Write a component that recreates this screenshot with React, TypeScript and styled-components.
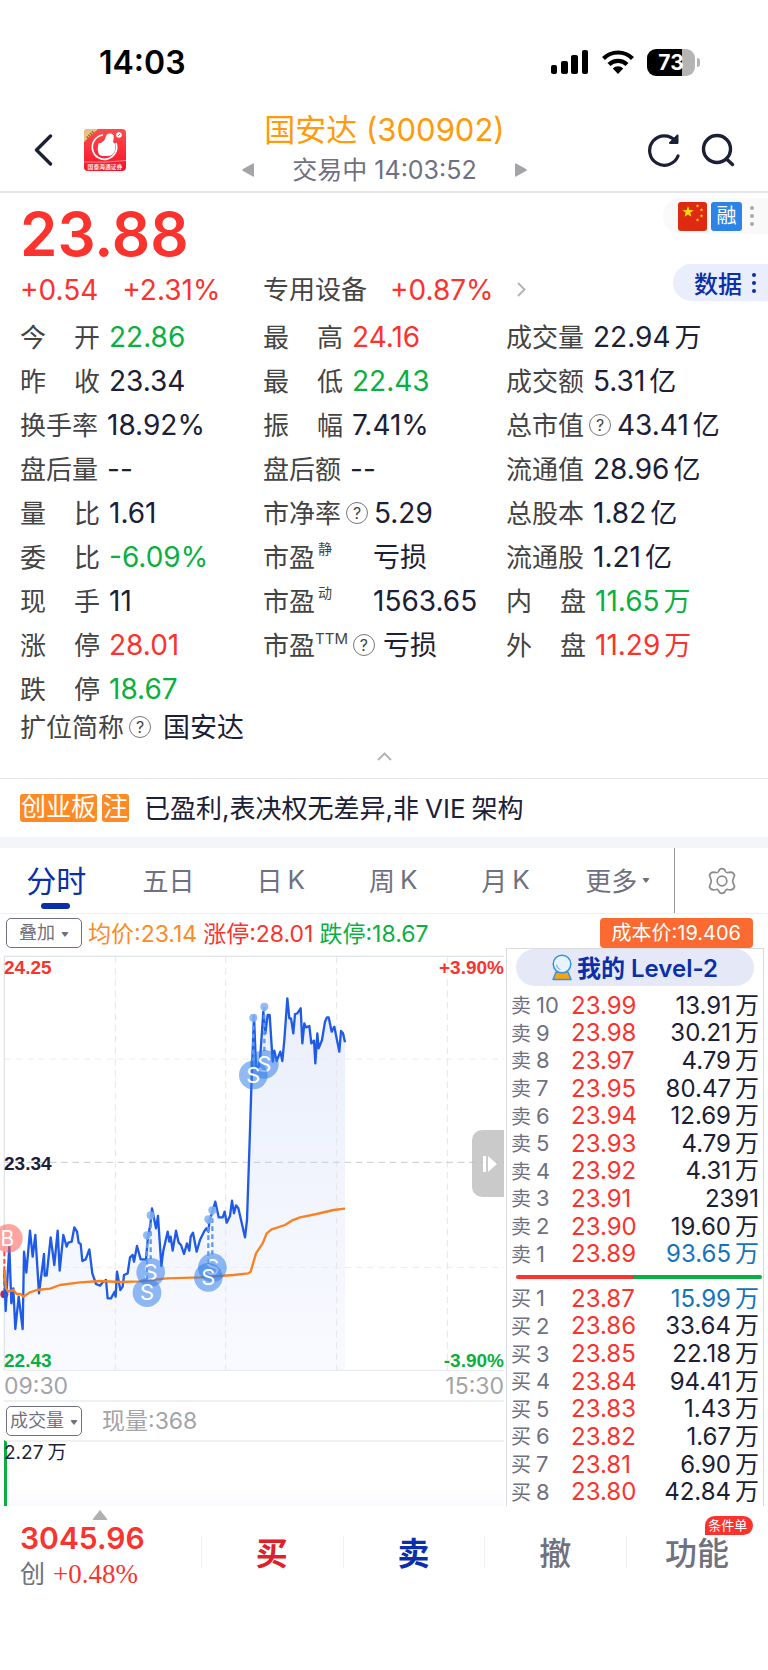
import React from "react";
import styled, { createGlobalStyle, css } from "styled-components";

const color = {
  ink: "#1b2036",
  label: "#444444",
  muted: "#6f7180",
  faint: "#a3a3a8",
  red: "#fa332e",
  green: "#0ab03f",
  blue: "#0a2fa8",
  link: "#1573bd",
  orange: "#fe8a25",
  line: "#e4e6ea",
};

type Tone = "up" | "down" | "plain" | "link";
const tones: Record<Tone, string> = {
  up: color.red,
  down: color.green,
  plain: color.ink,
  link: color.link,
};

const GlobalStyle = createGlobalStyle`
  * { box-sizing: border-box; }
  body {
    margin: 0;
    background: #fff;
    color: ${color.ink};
    font-family: Inter, "Noto Sans CJK SC", sans-serif;
    font-size: 26px;
  }
  button {
    font: inherit;
    color: inherit;
    background: none;
    border: 0;
    padding: 0;
    margin: 0;
    cursor: pointer;
  }
  a { color: inherit; text-decoration: none; }
  svg { display: block; flex: none; }
`;

/* ---------- status bar ---------- */

const StatusBar = styled.div`
  display: flex;
  align-items: center;
  justify-content: space-between;
  height: 100px;
  padding: 24px 68px 0 99px;
`;
const Clock = styled.time`
  color: #000;
  font-size: 32px;
  font-weight: 600;
`;
const StatusIcons = styled.div`
  display: flex;
  align-items: center;
  gap: 13px;
`;
const Battery = styled.div`
  display: flex;
  align-items: center;
  gap: 2px;
  &::after {
    content: "";
    width: 3px;
    height: 9px;
    border-radius: 0 3px 3px 0;
    background: #b4b4b4;
  }
`;
const BatteryBody = styled.span`
  width: 48px;
  height: 27px;
  border-radius: 9px;
  background: linear-gradient(90deg, #000 73%, #b4b4b4 73%);
  color: #fff;
  font-size: 21px;
  font-weight: 700;
  line-height: 27px;
  text-align: center;
`;

/* ---------- header ---------- */

const Header = styled.header`
  display: grid;
  grid-template-columns: 1fr auto 1fr;
  align-items: center;
  height: 93px;
  padding: 5px 33px 0 34px;
  border-bottom: 2px solid ${color.line};
`;
const HeaderSide = styled.div<{ $end?: boolean }>`
  display: flex;
  align-items: center;
  gap: ${(p) => (p.$end ? 20 : 31)}px;
  padding-top: 3px;
  justify-content: ${(p) => (p.$end ? "flex-end" : "flex-start")};
`;
const HeaderTitle = styled.div`
  display: flex;
  flex-direction: column;
  align-items: center;
  gap: 4px;
`;
const StockName = styled.h1`
  margin: 0;
  color: #ff9a0a;
  font-size: 31px;
  font-weight: 400;
  line-height: 40px;
`;
const Session = styled.div`
  display: flex;
  align-items: center;
  gap: 38px;
  color: ${color.muted};
  font-size: 25px;
  line-height: 32px;
`;

/* ---------- quote ---------- */

const Quote = styled.section`
  padding: 0 0 12px 20px;
`;
const PriceRow = styled.div`
  display: flex;
  justify-content: space-between;
  align-items: flex-start;
  height: 71px;
  padding-top: 5px;
`;
const Price = styled.strong`
  color: ${color.red};
  font-size: 60px;
  font-weight: 600;
  line-height: 72px;
`;
const TagPill = styled.div`
  display: flex;
  align-items: center;
  gap: 4px;
  height: 36px;
  padding: 0 14px 0 15px;
  border-radius: 18px 0 0 18px;
  background: #f9f9fa;
`;
const MarginTag = styled.span`
  width: 31px;
  height: 29px;
  border-radius: 3px;
  background: #2e83e6;
  color: #fff;
  font-size: 20px;
  line-height: 28px;
  text-align: center;
`;
const Columns = styled.div`
  display: grid;
  grid-template-columns: minmax(0, 243fr) minmax(0, 243fr) minmax(0, 262fr);
`;
const ChangeRow = styled(Columns)`
  align-items: center;
  height: 51px;
`;
const Change = styled.div`
  display: flex;
  gap: 24px;
  color: ${color.red};
  font-size: 28px;
`;
const Sector = styled.a`
  display: flex;
  align-items: center;
  gap: 23px;
  color: ${color.label};
  white-space: nowrap;
`;
const SectorName = styled.span`
  padding-bottom: 4px;
`;
const DataButton = styled.button`
  display: flex;
  align-items: center;
  justify-self: end;
  gap: 10px;
  height: 37px;
  margin-bottom: 14px;
  padding: 0 12px 0 21px;
  border-radius: 19px 0 0 19px;
  background: #eaedfb;
  color: ${color.blue};
  font-size: 24px;
  font-weight: 500;
`;
const StatColumn = styled.dl`
  margin: 0;
`;
const Stat = styled.div<{ $compact?: boolean }>`
  display: flex;
  align-items: center;
  height: ${(p) => (p.$compact ? 31 : 44)}px;
  white-space: nowrap;
`;
const StatLabel = styled.dt<{ $spread?: boolean }>`
  display: flex;
  align-items: center;
  padding-bottom: 3px;
  color: ${color.label};
  ${(p) =>
    p.$spread &&
    css`
      width: 80px;
      justify-content: space-between;
    `}
`;
const Sup = styled.sup<{ $wide?: boolean }>`
  align-self: flex-start;
  margin-left: ${(p) => (p.$wide ? 0 : 3)}px;
  font-size: ${(p) => (p.$wide ? 15 : 14)}px;
  line-height: ${(p) => (p.$wide ? 28 : 24)}px;
`;
const StatValue = styled.dd<{ $tone: Tone; $gap: number }>`
  display: flex;
  align-items: center;
  margin: 0 0 0 ${(p) => p.$gap}px;
  color: ${(p) => tones[p.$tone]};
  font-size: 28px;
`;
const Words = styled.span`
  padding-bottom: 3px;
  font-size: 27px;
`;
const Unit = styled.span`
  margin-left: 4px;
`;
const StatUnit = styled(Words)`
  margin-left: 4px;
`;
const Help = styled.span`
  display: inline-block;
  width: 22px;
  height: 22px;
  margin: 3px 0 0 5px;
  border: 1px solid #777;
  border-radius: 50%;
  color: ${color.label};
  font-size: 16px;
  line-height: 20px;
  text-align: center;
`;
const CollapseButton = styled.button`
  display: block;
  margin: 5px auto 0;
  padding: 5px 20px 5px 0;
`;

/* ---------- notice ---------- */

const Notice = styled.section`
  display: flex;
  align-items: center;
  height: 59px;
  padding: 0 20px;
  border-top: 1px solid ${color.line};
`;
const NoticeTag = styled.span`
  height: 28px;
  margin-right: 5px;
  padding: 0 1px;
  border-radius: 3px;
  background: ${color.orange};
  color: #fff;
  font-size: 25px;
  line-height: 27px;
`;
const NoticeText = styled.p`
  margin: 0 0 0 10px;
  padding-bottom: 4px;
`;
const Word = styled.span`
  margin: 0 6px;
`;
const Band = styled.div`
  height: 11px;
  background: #f3f5fb;
`;

/* ---------- tabs ---------- */

const Tabs = styled.nav`
  display: grid;
  grid-template-columns: 675fr 93fr;
  height: 66px;
  border-bottom: 1px solid #eef0f3;
`;
const TabList = styled.div`
  display: flex;
  border-right: 1px solid #999;
`;
const Tab = styled.button<{ $active?: boolean }>`
  position: relative;
  flex: 1;
  display: flex;
  align-items: center;
  justify-content: center;
  gap: 5px;
  padding-bottom: 3px;
  color: ${(p) => (p.$active ? color.blue : color.muted)};
  font-size: ${(p) => (p.$active ? 30 : 26)}px;
  ${(p) =>
    p.$active &&
    css`
      &::after {
        content: "";
        position: absolute;
        left: calc(50% - 15px);
        bottom: 4px;
        width: 29px;
        height: 6px;
        border-radius: 3px;
        background: ${color.blue};
      }
    `}
`;
const SettingsButton = styled.button`
  display: flex;
  align-items: center;
  justify-content: center;
`;
const Caret = styled.span`
  margin-top: 2px;
  border: 4px solid transparent;
  border-top: 5px solid currentColor;
  border-bottom: 0;
  border-radius: 2px;
`;

/* ---------- chart ---------- */

const Legend = styled.div`
  display: flex;
  align-items: center;
  gap: 6px;
  height: 34px;
  padding: 4px 15px 0 6px;
  font-size: 23px;
  line-height: 30px;
`;
const LegendValue = styled.span<{ $color: string }>`
  padding-top: 1px;
  color: ${(p) => p.$color};
  white-space: nowrap;
`;
const CostTag = styled.span`
  margin-left: auto;
  padding: 0 12px;
  border-radius: 4px;
  background: #fb6a30;
  color: #fff;
  font-size: 20px;
  line-height: 30px;
`;
const Picker = styled.button`
  display: flex;
  align-items: center;
  justify-content: center;
  gap: 6px;
  width: 76px;
  height: 30px;
  border: 1px solid ${color.muted};
  border-radius: 5px;
  color: ${color.muted};
  font-size: 18px;
  white-space: nowrap;
`;
const Market = styled.div`
  display: flex;
  align-items: stretch;
`;
const ChartColumn = styled.div`
  flex: 1;
  min-width: 0;
  padding-top: 7px;
`;
const ChartBox = styled.div`
  position: relative;
  svg {
    width: 100%;
    height: auto;
  }
`;
const AxisLabel = styled.span<{ $side: "left" | "right"; $at: string; $color: string }>`
  position: absolute;
  ${(p) => p.$side}: ${(p) => (p.$side === "left" ? 4 : 2)}px;
  top: ${(p) => p.$at};
  color: ${(p) => p.$color};
  font-family: "Liberation Sans", sans-serif;
  font-size: 19px;
  font-weight: 700;
  line-height: 22px;
`;
const TimeAxis = styled.div`
  display: flex;
  align-items: center;
  justify-content: space-between;
  height: 31px;
  margin: 0 2px 0 4px;
  border-bottom: 2px solid #eef0f2;
  color: ${color.faint};
  font-size: 23px;
`;
const VolumeHead = styled.div`
  display: flex;
  align-items: center;
  gap: 20px;
  height: 38px;
  margin: 0 2px 0 6px;
  color: ${color.faint};
  font-size: 23px;
  line-height: 30px;
`;
const VolumeBox = styled.div`
  height: 66px;
  margin: 0 2px 0 4px;
  border-top: 2px solid #eef0f2;
  border-left: 3px solid ${color.green};
  background: linear-gradient(#fff 70%, #fafbfe);
  font-size: 19px;
  line-height: 21px;
`;
const VolumeMax = styled.span`
  margin-left: -3px;
`;
const DrawerHandle = styled.button`
  position: absolute;
  right: 2px;
  top: 175px;
  display: flex;
  align-items: center;
  justify-content: flex-end;
  width: 32px;
  height: 67px;
  padding-right: 6px;
  border-radius: 10px 0 0 10px;
  background: rgba(180, 180, 180, 0.7);
  svg {
    width: 16px;
  }
`;

/* ---------- order book ---------- */

const Book = styled.aside`
  display: flex;
  flex-direction: column;
  width: 258px;
  margin-right: 4px;
  border: solid #d9dbdf;
  border-width: 1px 1px 0;
`;
const LevelButton = styled.button`
  display: flex;
  align-items: center;
  justify-content: center;
  gap: 5px;
  height: 37px;
  margin: 0 9px 6px;
  border-radius: 19px;
  background: #e5e9f7;
  color: ${color.blue};
  font-size: 24px;
  font-weight: 600;
`;
const LevelName = styled.span`
  padding-bottom: 3px;
`;
const BookTable = styled.table<{ $rows: number }>`
  width: 100%;
  height: ${(p) => (p.$rows === 10 ? 276 : 221)}px;
  border-collapse: collapse;
  line-height: 24px;
  th,
  td {
    padding: 0;
    font-weight: 400;
    white-space: nowrap;
  }
`;
const Level = styled.th`
  width: 64px;
  text-align: left;
  color: ${color.muted};
  font-size: 22px;
  span:first-child {
    margin: 0 5px 0 4px;
    font-size: 20px;
  }
`;
const LevelPrice = styled.td`
  color: ${color.red};
  font-size: 24px;
`;
const LevelQty = styled.td<{ $tone: Tone }>`
  color: ${(p) => tones[p.$tone]};
  font-size: 24px;
  text-align: right;
`;
const QtyInner = styled.span`
  margin-right: 4px;
`;
const Balance = styled.div`
  height: 4px;
  margin: 7px 1px 6px 9px;
  border-radius: 2px;
  background: linear-gradient(90deg, ${color.red} 48%, ${color.green} 48%);
`;

/* ---------- trade bar ---------- */

const TradeBar = styled.footer`
  display: grid;
  grid-template-columns: 201fr repeat(4, 142fr);
  height: 164px;
  padding-bottom: 69px;
`;
const IndexLink = styled.a`
  display: flex;
  flex-direction: column;
  padding-left: 20px;
  line-height: 36px;
`;
const UpMark = styled.span`
  width: 0;
  margin: 4px 0 0 72px;
  border: 8px solid transparent;
  border-top: 0;
  border-bottom: 10px solid #b0b0b0;
  border-radius: 2px;
`;
const IndexValue = styled.strong`
  color: ${color.red};
  font-size: 30px;
  font-weight: 600;
`;
const IndexChange = styled.span`
  display: flex;
  gap: 8px;
  color: ${color.muted};
  font-size: 25px;
  em {
    color: ${color.red};
    font-family: "Liberation Serif", serif;
    font-size: 27px;
    font-style: normal;
  }
`;
const TradeButton = styled.button<{ $color: string; $bold?: boolean }>`
  position: relative;
  color: ${(p) => p.$color};
  font-size: 32px;
  font-weight: ${(p) => (p.$bold ? 700 : 500)};
  line-height: 32px;
  &::before {
    content: "";
    position: absolute;
    left: 0;
    top: 30px;
    width: 1px;
    height: 32px;
    background: #eeeff7;
  }
`;
const Badge = styled.span`
  position: absolute;
  left: 79px;
  top: 10px;
  padding: 0 6px 0 3px;
  border-radius: 10px 10px 10px 0;
  background: ${color.red};
  color: #fff;
  font-size: 13px;
  font-weight: 400;
  line-height: 19px;
`;

/* ---------- icons ---------- */

const SignalIcon = () => (
  <svg width="38" height="24" viewBox="0 0 38 24">
    <rect x="0" y="15" width="6" height="9" rx="2" />
    <rect x="10" y="11" width="7" height="13" rx="2" />
    <rect x="20" y="5" width="7" height="19" rx="2" />
    <rect x="31" y="0" width="6" height="24" rx="2" />
  </svg>
);
const WifiIcon = () => (
  <svg width="32" height="24" viewBox="0 0 32 24" fill="none" stroke="#000" strokeWidth="4.200">
    <path d="M1.500 8.500a20.500 20.500 0 0 1 29 0" />
    <path d="M7 14.500a12.800 12.800 0 0 1 18 0" />
    <path d="M16 24l-5.200-5.500a7.200 7.200 0 0 1 10.400 0z" fill="#000" stroke="none" />
  </svg>
);
const BackIcon = () => (
  <svg width="19" height="32" viewBox="0 0 19 32" fill="none" stroke={color.ink} strokeWidth="3.400" strokeLinecap="round" strokeLinejoin="round">
    <path d="M16.500 2L2.500 16l14 14" />
  </svg>
);
const RefreshIcon = () => (
  <svg width="34" height="34" viewBox="0 0 34 34" fill="none" stroke={color.ink} strokeWidth="3.200" strokeLinecap="round" strokeLinejoin="round">
    <path d="M31 23A14.700 14.700 0 1 1 28.500 8" />
    <path d="M30.500 2.500v7.500h-7.500z" fill={color.ink} strokeWidth="2" />
  </svg>
);
const SearchIcon = () => (
  <svg width="34" height="34" viewBox="0 0 34 34" fill="none" stroke={color.ink} strokeWidth="3.400" strokeLinecap="round">
    <circle cx="16" cy="16" r="13.500" />
    <path d="M25.500 26l6 5.500" />
  </svg>
);
const BrokerLogo = () => (
  <svg width="42" height="42" viewBox="0 0 42 42">
    <defs>
      <linearGradient id="logoRed" x1="0" y1="0" x2="0" y2="1">
        <stop offset="0" stopColor="#fb4d4a" />
        <stop offset="1" stopColor="#f8122c" />
      </linearGradient>
      <clipPath id="logoClip"><rect width="42" height="42" rx="4" /></clipPath>
    </defs>
    <g clipPath="url(#logoClip)">
      <rect width="42" height="42" fill="url(#logoRed)" />
      <path d="M0 0h14L0 13z" fill="#e9c184" />
      <path d="M3 9l7-7" stroke="#9a6a35" strokeWidth="2.500" strokeDasharray="1.500 1" />
      <path d="M19 6A12.200 12.200 0 1 0 32 14" fill="none" stroke="#fff" strokeWidth="1.700" />
      <path d="M14.500 14.500q3-.5 5-2.500 2-2 2.500-5 .5-2.500 4-2.500 4 .3 3.800 4l-.8 4.500q2.500 1.500 2.500 4 0 6-3 8.500-2 1.500-6 1.500h-4q-3-.2-4-2.500-1.500-5 0-10z" fill="#fff" />
      <circle cx="35" cy="6" r="2.800" fill="#fff" />
      <path d="M34 7l2-2" stroke="#fb4d4a" strokeWidth="1" />
      <path d="M0 33q21 1 42-1.500" fill="none" stroke="#ff8a88" strokeWidth="1" />
      <text x="21" y="39.500" textAnchor="middle" fontSize="5.800" fontWeight="500" fill="#fff">国泰海通证券</text>
    </g>
  </svg>
);
const ArrowMark = ({ flip }: { flip?: boolean }) => (
  <svg width="12" height="14" viewBox="0 0 12 14" fill={color.faint}>
    <path d={flip ? "M0 1q0-1 1-.6L11 6q1.500 1 0 2L1 13.600q-1 .4-1-.6z" : "M12 1q0-1-1-.6L1 6q-1.500 1 0 2l10 5.600q1 .4 1-.6z"} />
  </svg>
);
const star = (cx: number, cy: number, r: number) =>
  Array.from({ length: 10 }, (_, i) => {
    const a = -Math.PI / 2 + (i * Math.PI) / 5;
    const k = i % 2 ? r * 0.4 : r;
    return `${cx + k * Math.cos(a)},${cy + k * Math.sin(a)}`;
  }).join(" ");
const FlagIcon = () => (
  <svg width="29" height="29" viewBox="0 0 29 29" fill="#fddc04">
    <rect width="29" height="29" rx="3" fill="#df2a12" />
    <polygon points={star(10, 10, 6)} />
    <polygon points={star(19.5, 4, 2)} />
    <polygon points={star(23.5, 8, 2)} />
    <polygon points={star(23.5, 14, 2)} />
    <polygon points={star(19.5, 18, 2)} />
  </svg>
);
const Dots = ({ r, gap, fill }: { r: number; gap: number; fill: string }) => (
  <svg width={r * 2} height={gap * 2 + r * 2} fill={fill}>
    <circle cx={r} cy={r} r={r} />
    <circle cx={r} cy={r + gap} r={r} />
    <circle cx={r} cy={r + gap * 2} r={r} />
  </svg>
);
const TagDots = styled.span`
  margin-left: 4px;
`;
const ChevronRight = () => (
  <svg width="9" height="15" viewBox="0 0 9 15" fill="none" stroke="#b5b5b5" strokeWidth="2">
    <path d="M1 1l6.500 6.500L1 14" />
  </svg>
);
const ChevronUp = () => (
  <svg width="15" height="9" viewBox="0 0 15 9" fill="none" stroke="#b5b5b5" strokeWidth="2">
    <path d="M1 8l6.500-6.500L14 8" />
  </svg>
);
const GearIcon = () => (
  <svg width="28" height="28" viewBox="0 0 28 28" fill="none" stroke="#8c8c8c" strokeWidth="1.700" strokeLinejoin="round">
    <path d="M11.600 2.500Q14 .6 16.400 2.500L17.600 4.600Q18.400 5.800 19.900 5.500L22.500 5.100Q25.600 5.400 26.600 8.300L25.300 11.600Q24.200 14 25.300 16.400L26.600 19.700Q25.600 22.600 22.500 22.900L19.900 22.500Q18.400 22.200 17.600 23.400L16.400 25.500Q14 27.400 11.600 25.500L10.400 23.400Q9.600 22.200 8.100 22.500L5.500 22.900Q2.400 22.600 1.400 19.700L2.700 16.400Q3.800 14 2.700 11.600L1.400 8.300Q2.400 5.400 5.500 5.100L8.100 5.500Q9.600 5.800 10.400 4.600Z" />
    <circle cx="14" cy="14" r="4.800" />
  </svg>
);
const CrystalBall = () => (
  <svg width="20" height="27" viewBox="0 0 20 27">
    <path d="M4 18h12l3 7.500H1z" fill="#faa20e" stroke="#2f93e6" strokeWidth="1.400" strokeLinejoin="round" />
    <circle cx="10" cy="10" r="8.800" fill="#e9f3fd" stroke="#2f93e6" strokeWidth="1.500" />
    <path d="M4.500 10.500a6 6 0 0 0 4 5" fill="none" stroke="#7db8ee" strokeWidth="1.300" />
  </svg>
);

/* ---------- intraday chart ---------- */

const priceLine =
  "13,870 17,993 22,900 28,800 34,970 40,925 46,1047 56,950 68,1047 72,815 79,878 90,752 98,830 106,765 117,940 132,822 134,887 140,887 152,772 163,855 173,752 179,872 190,765 200,800 205,788 215,785 223,742 231,755 236,788 242,792 247,843 257,838 268,808 277,880 288,912 300,917 308,907 318,900 323,955 333,955 344,935 347,950 351,875 361,930 368,920 372,885 383,880 390,832 398,825 402,845 411,798 422,838 438,838 444,770 451,735 456,685 468,745 474,708 484,858 490,812 503,755 508,785 512,770 518,812 528,752 536,788 543,795 552,822 561,790 568,812 572,770 579,758 590,815 600,780 612,755 619,745 625,755 629,718 636,700 646,665 656,712 668,712 674,695 680,728 690,708 696,662 702,700 708,676 715,685 735,772 741,720 750,450 755,290 762,108 768,260 776,262 780,240 790,95 796,160 803,105 809,105 818,245 823,212 830,243 841,215 847,243 853,180 862,55 868,115 873,115 880,160 885,102 892,100 902,85 907,190 913,130 918,142 928,138 934,190 942,182 946,250 952,160 956,205 966,180 975,125 981,112 986,112 995,155 1003,140 1018,215 1023,153 1029,160 1035,187";
const averageLine =
  "13,870 18,925 25,935 40,930 50,942 62,942 70,950 90,937 110,930 150,926 180,915 240,907 300,903 360,906 420,904 500,895 600,892 700,885 745,880 752,875 768,820 788,790 800,760 815,748 855,735 875,722 900,712 950,702 1000,690 1035,686";

const sells = [
  { x: 793, dot: 80, y: 253 },
  { x: 760, dot: 113, y: 285 },
  { x: 452, dot: 706, y: 877 },
  { x: 441, dot: 766, y: 938 },
  { x: 637, dot: 691, y: 863 },
  { x: 625, dot: 718, y: 892 },
];

const IntradayChart = () => (
  <svg viewBox="0 0 1518 1248" role="img" aria-label="分时走势">
    <defs>
      <linearGradient id="area" x1="0" y1="0" x2="0" y2="1">
        <stop offset="0" stopColor="#eaeffc" />
        <stop offset="1" stopColor="#f9faff" />
      </linearGradient>
    </defs>
    <g transform="translate(0 75)" fill="none">
      <polygon points={`13,1170 ${priceLine} 1035,1170`} fill="url(#area)" />
      <g stroke="#e4e6e9" strokeWidth="3" strokeDasharray="20 14">
        {[346, 677, 1010, 1342].map((x) => (
          <path key={x} d={`M${x} -70V1170`} />
        ))}
        <path d="M13 237H1512" stroke="#ececee" />
        <path d="M13 547H1512" stroke="#d0d5dc" strokeWidth="4" />
        <path d="M13 862H1512" stroke="#ececee" />
      </g>
      <path d="M13 1170V-71H1512" stroke="#dfe4e9" strokeWidth="4" />
      <path d="M13 1171H1512" stroke="#e4e7ec" strokeWidth="3" />
      <path d="M13 815V945" stroke="#ff4f45" strokeWidth="6" strokeDasharray="14 8" />
      <circle cx="13" cy="943" r="12" fill="#b4275f" />
      <polyline points={priceLine} stroke="#1f5be6" strokeWidth="7" strokeLinejoin="round" />
      <polyline points={averageLine} stroke="#f98122" strokeWidth="7" strokeLinejoin="round" />
      <circle cx="25" cy="775" r="43" fill="#ff5a52" fillOpacity="0.55" />
      <text x="22" y="798" textAnchor="middle" fontSize="63" fill="#fff">B</text>
      {sells.map((s) => (
        <g key={s.x}>
          <path d={`M${s.x} ${s.dot}V${s.y - 40}`} stroke="#5d9af0" strokeWidth="7" strokeDasharray="14 10" />
          <circle cx={s.x} cy={s.dot} r="12" fill="#7fb0f5" fillOpacity="0.85" />
          <circle cx={s.x} cy={s.y} r="43" fill="#2c7ae8" fillOpacity="0.52" />
          <text x={s.x} y={s.y + 23} textAnchor="middle" fontSize="66" fill="#fff">S</text>
        </g>
      ))}
    </g>
  </svg>
);

/* ---------- data ---------- */

type StatRow = {
  label: string;
  value: string;
  unit?: string;
  tone?: Tone;
  help?: boolean;
  sup?: string;
  gap?: number;
};

const stats: StatRow[][] = [
  [
    { label: "今开", value: "22.86", tone: "down" },
    { label: "昨收", value: "23.34" },
    { label: "换手率", value: "18.92%" },
    { label: "盘后量", value: "--" },
    { label: "量比", value: "1.61" },
    { label: "委比", value: "-6.09%", tone: "down" },
    { label: "现手", value: "11" },
    { label: "涨停", value: "28.01", tone: "up" },
    { label: "跌停", value: "18.67", tone: "down" },
  ],
  [
    { label: "最高", value: "24.16", tone: "up" },
    { label: "最低", value: "22.43", tone: "down" },
    { label: "振幅", value: "7.41%" },
    { label: "盘后额", value: "--" },
    { label: "市净率", value: "5.29", help: true, gap: 6 },
    { label: "市盈", sup: "静", value: "亏损", gap: 41 },
    { label: "市盈", sup: "动", value: "1563.65", gap: 41 },
    { label: "市盈", sup: "TTM", value: "亏损", help: true, gap: 8 },
  ],
  [
    { label: "成交量", value: "22.94", unit: "万" },
    { label: "成交额", value: "5.31", unit: "亿" },
    { label: "总市值", value: "43.41", unit: "亿", help: true, gap: 6 },
    { label: "流通值", value: "28.96", unit: "亿" },
    { label: "总股本", value: "1.82", unit: "亿" },
    { label: "流通股", value: "1.21", unit: "亿" },
    { label: "内盘", value: "11.65", unit: "万", tone: "down" },
    { label: "外盘", value: "11.29", unit: "万", tone: "up" },
  ],
];

type Order = [string, string, string, string, Tone?];
const asks: Order[] = [
  ["10", "23.99", "13.91", "万"],
  ["9", "23.98", "30.21", "万"],
  ["8", "23.97", "4.79", "万"],
  ["7", "23.95", "80.47", "万"],
  ["6", "23.94", "12.69", "万"],
  ["5", "23.93", "4.79", "万"],
  ["4", "23.92", "4.31", "万"],
  ["3", "23.91", "2391", ""],
  ["2", "23.90", "19.60", "万"],
  ["1", "23.89", "93.65", "万", "link"],
];
const bids: Order[] = [
  ["1", "23.87", "15.99", "万", "link"],
  ["2", "23.86", "33.64", "万"],
  ["3", "23.85", "22.18", "万"],
  ["4", "23.84", "94.41", "万"],
  ["5", "23.83", "1.43", "万"],
  ["6", "23.82", "1.67", "万"],
  ["7", "23.81", "6.90", "万"],
  ["8", "23.80", "42.84", "万"],
];

const StatItem = ({ row }: { row: StatRow }) => {
  const spread = row.label.length === 2 && !row.sup;
  return (
    <Stat>
      <StatLabel $spread={spread}>
        {spread ? [...row.label].map((c) => <span key={c}>{c}</span>) : row.label}
        {row.sup && <Sup $wide={row.sup === "TTM"}>{row.sup}</Sup>}
        {row.help && <Help>?</Help>}
      </StatLabel>
      <StatValue $tone={row.tone ?? "plain"} $gap={row.gap ?? 9}>
        {row.value === "亏损" ? <Words>{row.value}</Words> : row.value}
        {row.unit && <StatUnit>{row.unit}</StatUnit>}
      </StatValue>
    </Stat>
  );
};

const Orders = ({ side, rows }: { side: string; rows: Order[] }) => (
  <BookTable $rows={rows.length}>
    <tbody>
      {rows.map(([level, price, qty, unit, tone]) => (
        <tr key={level}>
          <Level scope="row">
            <span>{side}</span>
            <span>{level}</span>
          </Level>
          <LevelPrice>{price}</LevelPrice>
          <LevelQty $tone={tone ?? "plain"}>
            <QtyInner>
              {qty}
              {unit && <Unit>{unit}</Unit>}
            </QtyInner>
          </LevelQty>
        </tr>
      ))}
    </tbody>
  </BookTable>
);

export default function App() {
  return (
    <>
      <GlobalStyle />
      <StatusBar>
        <Clock>14:03</Clock>
        <StatusIcons>
          <SignalIcon />
          <WifiIcon />
          <Battery>
            <BatteryBody>73</BatteryBody>
          </Battery>
        </StatusIcons>
      </StatusBar>

      <Header>
        <HeaderSide>
          <button aria-label="返回"><BackIcon /></button>
          <a href="#broker" aria-label="国泰海通证券"><BrokerLogo /></a>
        </HeaderSide>
        <HeaderTitle>
          <StockName>国安达 (300902)</StockName>
          <Session>
            <button aria-label="上一只"><ArrowMark /></button>
            <span>交易中 14:03:52</span>
            <button aria-label="下一只"><ArrowMark flip /></button>
          </Session>
        </HeaderTitle>
        <HeaderSide $end>
          <button aria-label="刷新"><RefreshIcon /></button>
          <button aria-label="搜索"><SearchIcon /></button>
        </HeaderSide>
      </Header>

      <main>
        <Quote>
          <PriceRow>
            <Price>23.88</Price>
            <TagPill>
              <FlagIcon />
              <MarginTag>融</MarginTag>
              <TagDots><Dots r={2} gap={8} fill="#aaa" /></TagDots>
            </TagPill>
          </PriceRow>
          <ChangeRow>
            <Change>
              <span>+0.54</span>
              <span>+2.31%</span>
            </Change>
            <Sector href="#sector">
              <SectorName>专用设备</SectorName>
              <Change as="span">+0.87%</Change>
              <ChevronRight />
            </Sector>
            <DataButton>
              数据
              <Dots r={2} gap={8} fill={color.blue} />
            </DataButton>
          </ChangeRow>
          <Columns>
            {stats.map((rows, i) => (
              <StatColumn key={i}>
                {rows.map((row) => (
                  <StatItem key={row.label + (row.sup ?? "")} row={row} />
                ))}
              </StatColumn>
            ))}
          </Columns>
          <StatColumn>
            <Stat $compact>
              <StatLabel>
                扩位简称<Help>?</Help>
              </StatLabel>
              <StatValue $tone="plain" $gap={12}><Words>国安达</Words></StatValue>
            </Stat>
          </StatColumn>
          <CollapseButton aria-label="收起"><ChevronUp /></CollapseButton>
        </Quote>

        <Notice>
          <NoticeTag>创业板</NoticeTag>
          <NoticeTag>注</NoticeTag>
          <NoticeText>
            已盈利,表决权无差异,非<Word>VIE</Word>架构
          </NoticeText>
        </Notice>
        <Band />

        <Tabs>
          <TabList>
            <Tab $active>分时</Tab>
            <Tab>五日</Tab>
            <Tab><span>日</span><span>K</span></Tab>
            <Tab><span>周</span><span>K</span></Tab>
            <Tab><span>月</span><span>K</span></Tab>
            <Tab>更多<Caret /></Tab>
          </TabList>
          <SettingsButton aria-label="设置"><GearIcon /></SettingsButton>
        </Tabs>

        <Legend>
          <Picker>叠加<Caret /></Picker>
          <LegendValue $color={color.orange}>均价:23.14</LegendValue>
          <LegendValue $color={color.red}>涨停:28.01</LegendValue>
          <LegendValue $color={color.green}>跌停:18.67</LegendValue>
          <CostTag>成本价:19.406</CostTag>
        </Legend>

        <Market>
          <ChartColumn>
            <ChartBox>
              <IntradayChart />
              <AxisLabel $side="left" $at="2px" $color={color.red}>24.25</AxisLabel>
              <AxisLabel $side="right" $at="2px" $color={color.red}>+3.90%</AxisLabel>
              <AxisLabel $side="left" $at="calc(50% - 10px)" $color={color.ink}>23.34</AxisLabel>
              <AxisLabel $side="left" $at="calc(100% - 21px)" $color={color.green}>22.43</AxisLabel>
              <AxisLabel $side="right" $at="calc(100% - 21px)" $color={color.green}>-3.90%</AxisLabel>
              <DrawerHandle aria-label="收起盘口">
                <svg width="16" height="18" viewBox="0 0 16 18" fill="#fff">
                  <rect x="1" y="1" width="3" height="16" />
                  <path d="M6 1L15 9L6 17Z" />
                </svg>
              </DrawerHandle>
            </ChartBox>
            <TimeAxis>
              <span>09:30</span>
              <span>15:30</span>
            </TimeAxis>
            <VolumeHead>
              <Picker>成交量<Caret /></Picker>
              <span>现量:368</span>
            </VolumeHead>
            <VolumeBox>
              <VolumeMax>2.27<Unit>万</Unit></VolumeMax>
            </VolumeBox>
          </ChartColumn>
          <Book>
            <LevelButton>
              <CrystalBall />
              <LevelName>我的 Level-2</LevelName>
            </LevelButton>
            <Orders side="卖" rows={asks} />
            <Balance />
            <Orders side="买" rows={bids} />
          </Book>
        </Market>
      </main>

      <TradeBar>
        <IndexLink href="#index">
          <UpMark />
          <IndexValue>3045.96</IndexValue>
          <IndexChange>
            创 <em>+0.48%</em>
          </IndexChange>
        </IndexLink>
        <TradeButton $color="#dd2127" $bold>买</TradeButton>
        <TradeButton $color={color.blue} $bold>卖</TradeButton>
        <TradeButton $color={color.muted}>撤</TradeButton>
        <TradeButton $color={color.muted}>
          功能
          <Badge>条件单</Badge>
        </TradeButton>
      </TradeBar>
    </>
  );
}
